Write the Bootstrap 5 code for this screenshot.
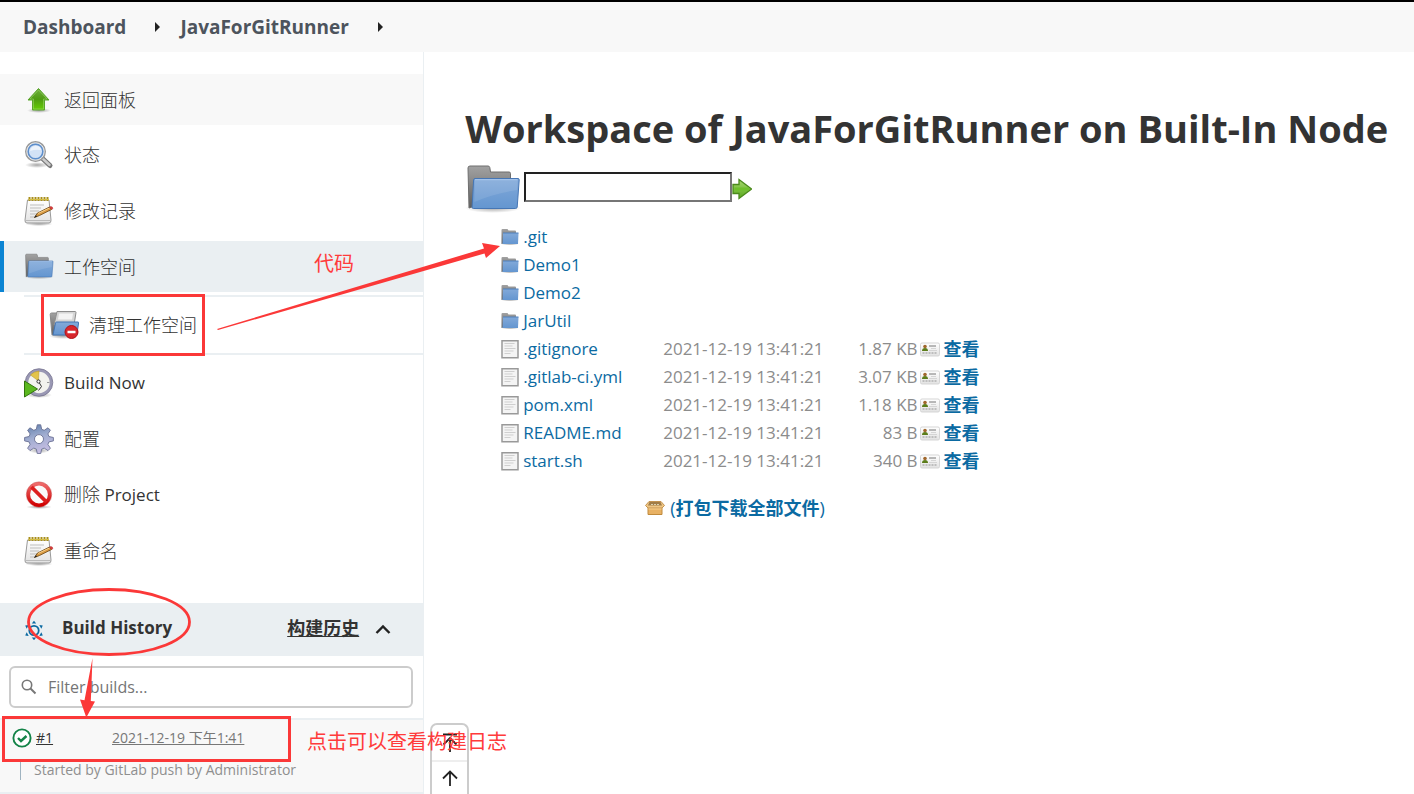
<!DOCTYPE html>
<html lang="zh-CN">
<head>
<meta charset="utf-8">
<meta name="viewport" content="width=device-width, initial-scale=1">
<title>JavaForGitRunner - Workspace</title>
<link href="https://cdn.jsdelivr.net/npm/bootstrap@5.3.0/dist/css/bootstrap.min.css" rel="stylesheet">
<style>
  body { font-family: "Open Sans", "Noto Sans CJK SC", sans-serif; font-size: 17px; color: #333; background: #fff; }
  a { color: #0b6aa2; text-decoration: none; }
  svg { display: block; flex: none; }
  .crumbs { border-top: 2px solid #000; background: #f8f8f8; height: 52px; padding-left: 23px; font-size: 19px; }
  .crumbs a { color: #4d545d; font-weight: 700; }
  .crumbs .sep { width: 54px; padding-left: 29px; }
  .side { width: 30%; border-right: 1px solid #eaeff2; padding-top: 22px; }
  .tasks { margin-bottom: 27px; }
  .task { position: relative; margin-bottom: 5px; }
  .task > a { display: flex; align-items: center; gap: 10px; height: 51px; padding-left: 24px; color: #333; }
  .han { font-size: 18px; line-height: 24px; font-family: "Open Sans", "Noto Sans CJK SC", sans-serif; font-weight: 300; }
  .task.hovered { margin-bottom: 4px; }
  .task.hovered > a { background: #f8f8f8; }
  .task.current { margin-bottom: 3px; }
  .task.current > a { background: #eaeff2; border-left: 4px solid #0b84d3; padding-left: 20px; }
  .task.sub { margin: 0 0 2px 24px; border-top: 2px solid #eaeff2; border-bottom: 2px solid #eaeff2; }
  .task.sub > a { height: 56px; padding-left: 25px; }
  .history-head { position: relative; height: 53px; background: #eaeff2; padding: 0 31px 3px 24px; }
  .history-head h2 { font-size: 17px; font-weight: 700; margin: 0 0 0 18px; }
  .history-head .trend { font-size: 18px; font-weight: 700; color: #333; text-decoration: underline; }
  .fold { border: 0; background: none; padding: 0; margin-left: 15px; }
  .finder { padding: 10px 10px 10px 9px; }
  .finder label { height: 42px; border: 2px solid #ccc; border-radius: 6px; padding: 0 10px 0 9px; gap: 8px; }
  .finder input { border: 0; outline: 0; font-size: 16px; min-width: 0; }
  .finder input::placeholder { color: #757575; }
  .builds { position: relative; border-top: 2px solid #eaeff2; border-bottom: 2px solid #eaeff2; background: #f8f8f8; height: 76px; padding: 8px 0 0 12px; font-size: 14px; line-height: 20px; }
  .builds a { text-decoration: underline; }
  .builds .num { color: #333; width: 76px; margin-left: 4px; }
  .builds .when { color: #777; }
  .builds .cause { margin: 12px 0 0 8px; padding-left: 13px; border-left: 1px solid #9fb3c0; color: #8f8f8f; }
  .pager { position: absolute; left: 100%; margin-left: 7px; top: 3px; width: 39px; border: 2px solid #ccc; border-bottom: 0; border-radius: 7px 7px 0 0; background: #fff; }
  .pager button { display: flex; align-items: center; justify-content: center; width: 100%; height: 35px; border: 0; background: none; padding: 0; }
  .pager button + button { border-top: 2px solid #eee; height: 34px; }
  .work { padding: 48px 16px 0 41px; }
  .work h1 { font-size: 38px; line-height: 56px; font-weight: 700; margin: 0; white-space: nowrap; }
  .path { margin: 8px 0 9px 0; }
  .path input { width: 208px; height: 30px; border: 2px solid; border-color: #222 #767676 #767676 #222; border-radius: 0; outline: 0; margin: 0 0 4px 3px; }
  .path button { border: 0; background: none; padding: 0; }
  .files { margin-left: 36px; }
  .files td { height: 28px; padding: 0; line-height: 28px; white-space: nowrap; }
  .files .name { width: 162px; }
  .files .date, .files .size { color: #8c8c8c; }
  .files .date { width: 158px; }
  .files .size { width: 94px; text-align: right; }
  .files .view { font-size: 18px; font-weight: 700; padding-left: 2px; }
  .zip { margin: 19px 0 0 180px; font-size: 18px; line-height: 28px; gap: 5px; }
  .note { position: absolute; z-index: 3; color: #ff3b3b; pointer-events: none; }
  .note-text { font-size: 20px; line-height: 28px; font-weight: 400; white-space: nowrap; font-family: "Noto Sans CJK SC", sans-serif; }
  .note-frame { border: 3px solid #fb3838; }
</style>
</head>
<body>
<svg width="0" height="0" class="position-absolute" aria-hidden="true">
  <defs>
    <linearGradient id="gGreen" x2="0" y2="1"><stop offset="0" stop-color="#6fae3f"/><stop offset=".5" stop-color="#4f9c12"/><stop offset="1" stop-color="#66cf06"/></linearGradient>
    <linearGradient id="gGo" x2="0" y2="1"><stop offset="0" stop-color="#a5d86c"/><stop offset="1" stop-color="#58a81c"/></linearGradient>
    <linearGradient id="gBlue" x2="0" y2="1"><stop offset="0" stop-color="#82a9d9"/><stop offset="1" stop-color="#6496d0"/></linearGradient>
    <linearGradient id="gGrey" x2="0" y2="1"><stop offset="0" stop-color="#a2a2a2"/><stop offset="1" stop-color="#5e5e5e"/></linearGradient>
    <linearGradient id="gPaper" x2="0" y2="1"><stop offset="0" stop-color="#fff"/><stop offset="1" stop-color="#e2e2e2"/></linearGradient>
    <linearGradient id="gGear" x2=".3" y2="1"><stop offset="0" stop-color="#5b7ca9"/><stop offset=".5" stop-color="#a0add0"/><stop offset="1" stop-color="#c4bce2"/></linearGradient>
    <linearGradient id="gRed" x2="0" y2="1"><stop offset="0" stop-color="#ee6a6a"/><stop offset="1" stop-color="#d00000"/></linearGradient>
    <radialGradient id="gShade"><stop offset="0" stop-color="#000" stop-opacity=".35"/><stop offset="1" stop-color="#000" stop-opacity="0"/></radialGradient>
    <symbol id="i-folder" viewBox="0 0 56 50">
      <ellipse cx="28" cy="44" rx="28" ry="5" fill="url(#gShade)"/>
      <path d="M4 44L3 4q0-2 2-2h18q1.500 0 1.800 1.500L25.500 8H44q1.500 0 1.500 1.500V30z" fill="url(#gGrey)" stroke="#6e6e6e"/>
      <path d="M10 14.500h43q1.300 0 1.200 1.500l-2 27q-.2 1.500-1.700 1.500H8.500q-1.500 0-1.400-1.500l1.500-27q.1-1.500 1.400-1.500z" fill="url(#gBlue)" stroke="#4676b4"/>
      <path d="M10 15.700h42.800l-.7 10.300q-22 3-42.800 12z" fill="#fff" fill-opacity=".1"/>
      <path d="M10 15.700h42.500" stroke="#a9c8ee"/>
    </symbol>
    <symbol id="i-folder-s" viewBox="0 0 18 18">
      <ellipse cx="9" cy="16" rx="9" ry="1.500" fill="url(#gShade)"/>
      <path d="M.5 16V2q0-1 1-1h5l1 1.500H14q1 0 1 1V12z" fill="url(#gGrey)"/>
      <path d="M2 5h15.500L17 16H1.500z" fill="url(#gBlue)"/>
      <path d="M2 5h15.500" stroke="#4f80bd"/>
    </symbol>
    <symbol id="i-notepad" viewBox="0 0 30 30">
      <ellipse cx="15" cy="28" rx="14" ry="2" fill="url(#gShade)"/>
      <path d="M3.500 4H25l2 20q.2 3-2 3H3q-2.300 0-2-3z" fill="url(#gPaper)" stroke="#999"/>
      <path d="M2 24.500h24.500" stroke="#bbb"/>
      <path d="M6 9h14M6 12h11M6 15h9M6 18h7M6 21h4" stroke="#bdbdbd"/>
      <path d="M5.500 1v4M8.500 1v4M11.500 1v4M14.500 1v4M17.500 1v4M20.500 1v4M23.500 1v4" stroke="#a88f1d" stroke-width="2"/>
      <path d="M4.500 3.500h20.500" stroke="#d5bd44"/>
      <path d="M10.500 21.500l3-4.500L25.500 11l2 2.500-12 6z" fill="#d99a42" stroke="#6a4513" stroke-width=".8"/>
      <path d="M14 17.500l11.500-5.500" stroke="#f7cf8a"/>
      <path d="M25.500 11l1.500-.5q2 .2 1.800 2.300L27.500 13.500z" fill="#e23a3a" stroke="#a33" stroke-width=".5"/>
      <path d="M10 21.800l1.700-2.500 1.500 1.300z" fill="#222"/>
    </symbol>
    <symbol id="i-doc" viewBox="0 0 18 20">
      <path d="M1 1.700h16v17H1z" fill="#f4f4f4" stroke="#999" stroke-width="1.500"/>
      <path d="M3.500 4.500h10M3.500 7h8M3.500 9.500h11M3.500 12h9M3.500 14.500h6" stroke="#cfcfcf"/>
    </symbol>
    <symbol id="i-card" viewBox="0 0 20 15">
      <rect x=".5" y="1" width="19" height="13" rx="1.500" fill="url(#gPaper)" stroke="#d5d5d5"/>
      <circle cx="5" cy="4.500" r="1.800" fill="#a0672c"/><path d="M2 9q0-3 3-3t3 3z" fill="#5c7d1a"/>
      <path d="M9 4h7" stroke="#777"/><path d="M11 6.500h5M9 8.500h8" stroke="#d5d5d5"/><path d="M2.500 11h15" stroke="#b0b0b0" stroke-width="1.600" stroke-dasharray="2 1"/>
    </symbol>
  </defs>
</svg>

<nav class="crumbs d-flex align-items-center" aria-label="breadcrumb">
  <a href="#">Dashboard</a>
  <span class="sep"><svg width="5" height="10" viewBox="0 0 5 10"><path d="M0 0l5 5-5 5z" fill="#222"/></svg></span>
  <a href="#">JavaForGitRunner</a>
  <span class="sep"><svg width="5" height="10" viewBox="0 0 5 10"><path d="M0 0l5 5-5 5z" fill="#222"/></svg></span>
</nav>

<div class="d-flex align-items-stretch">
  <aside class="side flex-shrink-0">
    <ul class="tasks list-unstyled">
      <li class="task hovered"><a href="#">
        <svg width="30" height="30" viewBox="0 0 30 30"><ellipse cx="15" cy="25.500" rx="12" ry="2.500" fill="url(#gShade)"/><path d="M14.500 3.500L25 15h-4.500v10h-12V15H4z" fill="url(#gGreen)" stroke="#5aa52c"/><path d="M14.500 5l8.500 9h-3.500v10h-10V14H6z" fill="none" stroke="#a3db78" stroke-opacity=".5"/></svg>
        <span class="han">返回面板</span></a></li>
      <li class="task"><a href="#">
        <svg width="30" height="30" viewBox="0 0 30 30"><ellipse cx="13" cy="25" rx="12" ry="3" fill="url(#gShade)"/><path d="M18.500 18.500l7.500 7" stroke="#777" stroke-width="5" stroke-linecap="round"/><path d="M18 18l7.500 7" stroke="#ccc" stroke-width="2.500" stroke-linecap="round"/><circle cx="11.500" cy="11.500" r="9.500" fill="#cfdff4" stroke="#999" stroke-width="2"/><circle cx="11.500" cy="11.500" r="8.700" fill="none" stroke="#eee"/><circle cx="11.500" cy="11.500" r="7.300" fill="#d3e2f6" stroke="#5d8ecb" stroke-width="1.500"/><path d="M6 11q1-5 6-5t5 4q-5-1-11 1z" fill="#fff" fill-opacity=".6"/></svg>
        <span class="han">状态</span></a></li>
      <li class="task"><a href="#"><svg width="30" height="30"><use href="#i-notepad"/></svg><span class="han">修改记录</span></a></li>
      <li class="task current"><a href="#" aria-current="page"><svg width="30" height="27"><use href="#i-folder"/></svg><span class="han">工作空间</span></a>
        <span class="note note-text" style="left:314px;top:8px">代码</span></li>
      <li class="task sub"><a href="#">
        <svg width="30" height="30" viewBox="0 0 30 30"><ellipse cx="14" cy="26" rx="14" ry="3" fill="url(#gShade)"/><path d="M3 25L1.200 4.500q0-1.500 1.300-1.500H8l2 3h12V25z" fill="url(#gGrey)" stroke="#8a8a8a"/><path d="M8 1.500h18q1 0 1 1L25 15H5z" fill="#d5d5d5" stroke="#8d8d8d"/><path d="M10 3.500h14l-1 6H9z" fill="#f4f4f4"/><path d="M7.500 12H29q.8 0 .6 1l-1.800 12H4l2.500-12q.2-1 1-1z" fill="url(#gBlue)" stroke="#4374b2"/><circle cx="22.500" cy="22" r="6.500" fill="#d8262c" stroke="#b01217"/><path d="M18.500 22h8" stroke="#fff" stroke-width="2.500"/></svg>
        <span class="han">清理工作空间</span></a>
        <span class="note note-frame" style="left:17px;top:-3px;width:164px;height:62px"></span>
        <svg class="note" style="left:193px;top:-54px" width="284" height="88" viewBox="217 243 284 88"><path d="M217 329L484 248.500l-2-5.500L500 246l-14 12-1.500-4.500L218 330z" fill="#fb3838"/></svg></li>
      <li class="task"><a href="#">
        <svg width="30" height="30" viewBox="0 0 30 30"><ellipse cx="15" cy="27" rx="13" ry="3" fill="url(#gShade)"/><circle cx="15" cy="14.500" r="12.200" fill="#f3f3ee" stroke="#9a98b4" stroke-width="3"/><circle cx="15" cy="14.500" r="13.800" fill="none" stroke="#6b6986" stroke-width=".7"/><path d="M14.500 13L6.500 7q3-3.500 8.500-4z" fill="#e3c44a" stroke="#b59525" stroke-width=".5"/><path d="M14.500 13.500l3 5-3 4" stroke="#333" fill="none"/><circle cx="14.500" cy="13.500" r="1.600" fill="#fff" stroke="#333"/><path d="M23 14.500h2.500" stroke="#999"/><path d="M.5 13v16L13.500 21z" fill="#5bb81f" stroke="#33740f"/></svg>
        <span>Build Now</span></a></li>
      <li class="task"><a href="#">
        <svg width="30" height="30" viewBox="0 0 30 30"><ellipse cx="15" cy="26.500" rx="11" ry="3" fill="url(#gShade)"/><path fill-rule="evenodd" d="M13.300.8h3.400l1 4.500 2.500 1L24 3.800l2.400 2.400-2.500 3.700 1 2.600 4.500 1v3.400l-4.500 1-1 2.500 2.500 3.800-2.400 2.400-3.800-2.500-2.500 1-1 4.500h-3.400l-1-4.500-2.500-1-3.800 2.500-2.400-2.400 2.500-3.800-1-2.500-4.500-1v-3.400l4.500-1 1-2.600-2.500-3.700L6 3.800l3.800 2.500 2.500-1zM15 10.600a4.500 4.500 0 1 0 0 9 4.500 4.500 0 0 0 0-9z" fill="url(#gGear)" stroke="#6a7194" stroke-width=".9"/></svg>
        <span class="han">配置</span></a></li>
      <li class="task"><a href="#">
        <svg width="30" height="30" viewBox="0 0 30 30"><ellipse cx="15" cy="27" rx="13" ry="2" fill="url(#gShade)"/><circle cx="15" cy="14.500" r="10.700" fill="#fafafa" stroke="url(#gRed)" stroke-width="3.600"/><path d="M7.500 7L22.500 22" stroke="#dc1e1e" stroke-width="3.800"/><circle cx="15" cy="14.500" r="12.700" fill="none" stroke="#b22" stroke-opacity=".6" stroke-width=".7"/></svg>
        <span><span class="han">删除</span> Project</span></a></li>
      <li class="task"><a href="#"><svg width="30" height="30"><use href="#i-notepad"/></svg><span class="han">重命名</span></a></li>
    </ul>

    <section>
      <div class="history-head d-flex align-items-center">
        <svg width="20" height="24" viewBox="0 -4 20 24"><circle cx="10" cy="10.500" r="4.700" fill="none" stroke="#0b6aa2" stroke-width="1.800"/><path d="M10 .8l2.200 2.600H7.800zM10 20.200l2.200-2.600H7.800zM1.200 5.500l3.500-.5-2 3.700zM18.800 5.500l-3.500-.5 2 3.700zM1.200 15.500l3.500.5-2-3.700zM18.800 15.500l-3.500.5 2-3.700z" fill="#0b6aa2"/></svg>
        <h2>Build History</h2>
        <a class="trend ms-auto" href="#">构建历史</a>
        <button class="fold" type="button" aria-label="收起"><svg width="18" height="18" viewBox="0 0 18 18"><path d="M2.500 14L9 7.500l6.500 6.500" fill="none" stroke="#222" stroke-width="2.400"/></svg></button>
        <svg class="note" style="left:26px;top:-16px" width="166" height="70" viewBox="0 0 166 70"><ellipse cx="83" cy="35" rx="80.500" ry="32.500" fill="none" stroke="#fb3838" stroke-width="2.800"/></svg>
        <svg class="note" style="left:79px;top:55px" width="17" height="60" viewBox="79 658 17 60"><path d="M92.500 658l-1.700 43 4.200.5L86.300 717.500 80 699.500l4.500.7z" fill="#fb3838"/></svg>
      </div>
      <div class="finder">
        <label class="d-flex align-items-center">
          <svg width="18" height="18" viewBox="0 0 18 18"><circle cx="7" cy="7" r="4.700" fill="none" stroke="#777" stroke-width="1.600"/><path d="M10.500 10.500l5 5" stroke="#777" stroke-width="1.900"/></svg>
          <input type="search" class="flex-grow-1" placeholder="Filter builds..." aria-label="Filter builds">
        </label>
      </div>
      <div class="builds">
        <div class="d-flex align-items-center">
          <svg width="20" height="20" viewBox="0 0 20 20"><circle cx="10" cy="10" r="8.600" fill="#fff" stroke="#138347" stroke-width="1.900"/><path d="M6 10l3 3 5.500-5" fill="none" stroke="#138347" stroke-width="2.400"/></svg>
          <a class="num" href="#">#1</a>
          <a class="when" href="#">2021-12-19 下午1:41</a>
        </div>
        <div class="cause">Started by GitLab push by Administrator</div>
        <div class="pager">
          <button type="button" aria-label="顶部"><svg width="18" height="20" viewBox="0 0 18 20"><path d="M2 1.500h14M9 19V5M2.500 11.500L9 5l6.500 6.500" fill="none" stroke="#222" stroke-width="1.800"/></svg></button>
          <button type="button" aria-label="上一页"><svg width="18" height="18" viewBox="0 0 18 18"><path d="M9 17V2.500M2 9.500l7-7 7 7" fill="none" stroke="#222" stroke-width="1.800"/></svg></button>
        </div>
        <span class="note note-frame" style="left:2px;top:-4px;width:289px;height:46px"></span>
        <span class="note note-text" style="left:307px;top:7px">点击可以查看构建日志</span>
      </div>
    </section>
  </aside>

  <main class="work flex-grow-1">
    <h1>Workspace of JavaForGitRunner on Built-In Node</h1>
    <form class="path d-flex align-items-center" onsubmit="return false">
      <svg width="56" height="50"><use href="#i-folder"/></svg>
      <input type="text" aria-label="路径">
      <button type="submit" aria-label="转到"><svg width="20" height="22" viewBox="0 0 20 22"><path d="M1 6.500h6v-5L19.500 11 7 20.500v-5H1z" fill="url(#gGo)" stroke="#4b8a1c" stroke-width="1.300"/><path d="M2.500 11H17" stroke="#6fc02c" stroke-width="3"/></svg></button>
    </form>
    <table class="files">
      <tbody id="rows"></tbody>
    </table>
    <a class="zip d-flex align-items-center" href="#">
      <svg width="20" height="16" viewBox="0 0 20 16"><path d="M3 6h14v8.500H3z" fill="#e8b163" stroke="#c08a3c"/><path d="M4 1.500h12l3.500 4-2.500 2.500H3L.5 5.500z" fill="#efc684" stroke="#c39350"/><path d="M4.500 2h11l1.500 3.500H3z" fill="#a07c48"/><path d="M6 4.500h8" stroke="#d9cfae" stroke-dasharray="2 1"/><path d="M3.500 9h13" stroke="#f6d08e"/></svg>
      <span>(<b>打包下载全部文件</b>)</span>
    </a>
  </main>
</div>

<script src="https://cdn.jsdelivr.net/npm/bootstrap@5.3.0/dist/js/bootstrap.bundle.min.js"></script>
<script>
  const day = '2021-12-19 13:41:21';
  const entries = [
    ['.git'], ['Demo1'], ['Demo2'], ['JarUtil'],
    ['.gitignore', '1.87 KB'], ['.gitlab-ci.yml', '3.07 KB'], ['pom.xml', '1.18 KB'],
    ['README.md', '83 B'], ['start.sh', '340 B']
  ];
  document.getElementById('rows').innerHTML = entries.map(([name, size]) => {
    const icon = size
      ? '<svg width="18" height="20"><use href="#i-doc"/></svg>'
      : '<svg width="18" height="18"><use href="#i-folder-s"/></svg>';
    const rest = size
      ? `<td class="date">${day}</td><td class="size">${size}</td>
         <td class="view"><a href="#" class="d-flex align-items-center gap-1"><svg width="20" height="15"><use href="#i-card"/></svg>查看</a></td>`
      : '<td colspan="3"></td>';
    return `<tr><td class="name"><a href="#" class="d-flex align-items-center gap-1">${icon}${name}</a></td>${rest}</tr>`;
  }).join('');
</script>
</body>
</html>
